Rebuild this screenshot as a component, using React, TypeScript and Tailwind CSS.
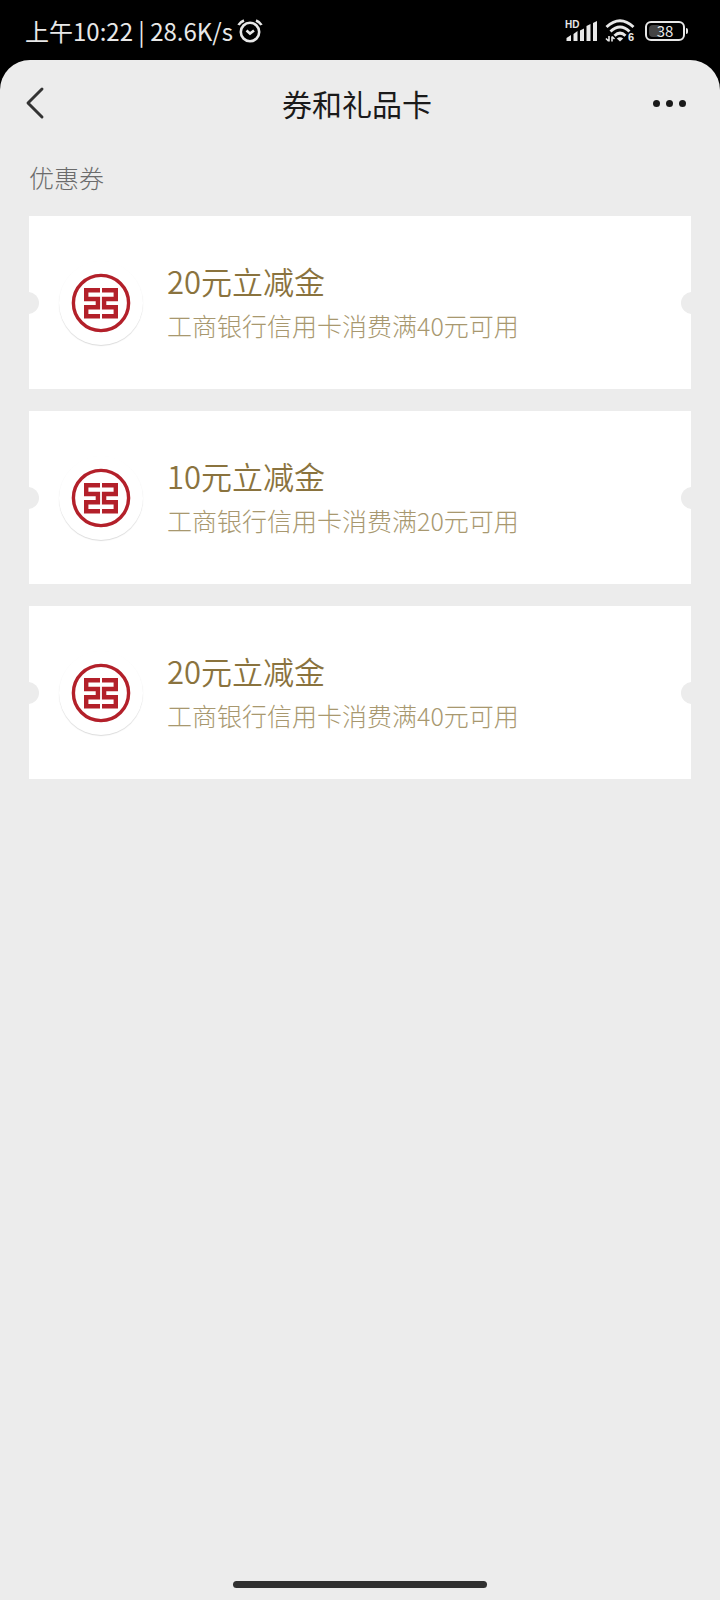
import { ChevronLeft } from 'lucide-react';

const COUPONS = [
    { id: 1, title: '20元立减金', desc: '工商银行信用卡消费满40元可用' },
    { id: 2, title: '10元立减金', desc: '工商银行信用卡消费满20元可用' },
    { id: 3, title: '20元立减金', desc: '工商银行信用卡消费满40元可用' },
];

function AlarmIcon() {
    return (
        <svg width="26" height="26" viewBox="0 0 26 26" fill="none" stroke="#e8e8e8" strokeWidth="2.6">
            <circle cx="13" cy="14" r="9.2" />
            <path d="M1.500 7Q3 4 7 2.500M19 2.500Q23 4 24.500 7" />
            <path d="M9.500 12.500l3.500 3 4-3" />
        </svg>
    );
}

function SignalIcon() {
    return (
        <svg width="34" height="24" viewBox="0 0 34 24" fill="#e8e8e8">
            <text x="0" y="9" fontSize="10" fontWeight="700" fontFamily="Liberation Sans, sans-serif">HD</text>
            <path d="M1.500 22v-3l4.500-3v6zM8.500 22v-7l4-3v10zM15 22V11.500L19 9.500v12.500zM21.500 22V7L25.500 5v17zM28 22V4l4-2v20z" />
        </svg>
    );
}

function WifiIcon() {
    return (
        <svg width="32" height="24" viewBox="0 0 32 24" fill="none" stroke="#e8e8e8" strokeWidth="2.9">
            <path d="M1.500 8Q15 -4.500 28.500 8" />
            <path d="M5.500 12.500Q15 3.500 24.500 12.500" />
            <path d="M9.500 16.800Q15 11.500 20.500 16.800" />
            <path d="M11.800 19.500Q15 16.800 18.200 19.500L15 22.500Z" fill="#e8e8e8" stroke="none" />
            <path d="M4 17v5.500M1 19.500l2.500 2.500M7 22.500v-5M7 17.500l2.500 2.500" strokeWidth="1.6" />
            <text x="23" y="22" fontSize="11" fontWeight="700" fill="#e8e8e8" stroke="none" fontFamily="Liberation Sans, sans-serif">6</text>
        </svg>
    );
}

function BankLogo() {
    return (
        <svg width="60" height="60" viewBox="0 0 60 60" fill="none" stroke="#b3202a">
            <circle cx="30" cy="30" r="27.600" strokeWidth="3.400" />
            <path d="M29 17.200H15.200V26H26.900V34.300H15.200V43.300H29" strokeWidth="4.400" />
            <path d="M31 17.200H44.800V26H33.100V34.300H44.800V43.300H31" strokeWidth="4.400" />
        </svg>
    );
}

function StatusBar() {
    return (
        <div className="flex h-[60px] items-center justify-between pl-[25px] pr-8 text-[#e8e8e8]">
            <div className="flex items-center gap-1 pt-0.5">
                <span className="text-2xl leading-8">上午10:22 | 28.6K/s</span>
                <AlarmIcon />
            </div>
            <div className="flex items-center gap-1.5 pt-0.5">
                <SignalIcon />
                <WifiIcon />
                <div className="flex items-center gap-px pl-0.5">
                    <div className="relative flex h-5 w-10 items-center justify-center rounded-md border-2 border-[#e8e8e8]">
                        <div className="absolute inset-y-0.5 left-0.5 w-3 rounded-sm bg-[#444444]" />
                        <span className="relative text-[15px] leading-4">38</span>
                    </div>
                    <div className="h-1.5 w-0.5 rounded-r bg-[#e8e8e8]" />
                </div>
            </div>
        </div>
    );
}

function CouponCard({ title, desc }: { title: string; desc: string }) {
    return (
        <li className="relative flex h-[173px] items-center gap-6 overflow-hidden bg-white pl-[30px]">
            <span className="absolute -left-3 top-[76px] size-[22px] rounded-full bg-[#ececec]" />
            <span className="absolute -right-3 top-[76px] size-[22px] rounded-full bg-[#ececec]" />
            <div className="flex size-[84px] shrink-0 items-center justify-center rounded-full bg-white shadow-[0_1px_1px_rgba(0,0,0,0.14)]">
                <BankLogo />
            </div>
            <div className="min-w-0">
                <h3 className="text-[31px] font-[350] leading-[44px] text-[#8a733e]">{title}</h3>
                <p className="text-[25px] font-light leading-[44px] text-[#a8986f]">{desc}</p>
            </div>
        </li>
    );
}

export default function App() {
    return (
        <div className="flex min-h-screen flex-col bg-black font-['Noto_Sans_CJK_SC',sans-serif]">
            <StatusBar />
            <div className="flex flex-1 flex-col rounded-t-[30px] bg-[#ececec]">
                <header className="flex h-[86px] items-center justify-between pl-[7px] pr-8">
                    <button aria-label="返回" className="text-[#333333]">
                        <ChevronLeft className="size-14" strokeWidth={1.25} />
                    </button>
                    <h1 className="text-[30px] leading-10 text-[#1a1a1a]">券和礼品卡</h1>
                    <button aria-label="更多" className="flex items-center gap-1.5 p-0.5">
                        <span className="size-[7px] rounded-full bg-[#1a1a1a]" />
                        <span className="size-[7px] rounded-full bg-[#1a1a1a]" />
                        <span className="size-[7px] rounded-full bg-[#1a1a1a]" />
                    </button>
                </header>
                <main className="flex-1 px-[29px]">
                    <h2 className="pb-5 pt-3 text-[25px] font-light leading-[38px] text-[#6b6b6b]">优惠券</h2>
                    <ul className="flex flex-col gap-[22px]">
                        {COUPONS.map((coupon) => (
                            <CouponCard key={coupon.id} title={coupon.title} desc={coupon.desc} />
                        ))}
                    </ul>
                </main>
                <div className="mx-auto mb-3 h-[7px] w-[254px] rounded-full bg-[#303030]" />
            </div>
        </div>
    );
}
